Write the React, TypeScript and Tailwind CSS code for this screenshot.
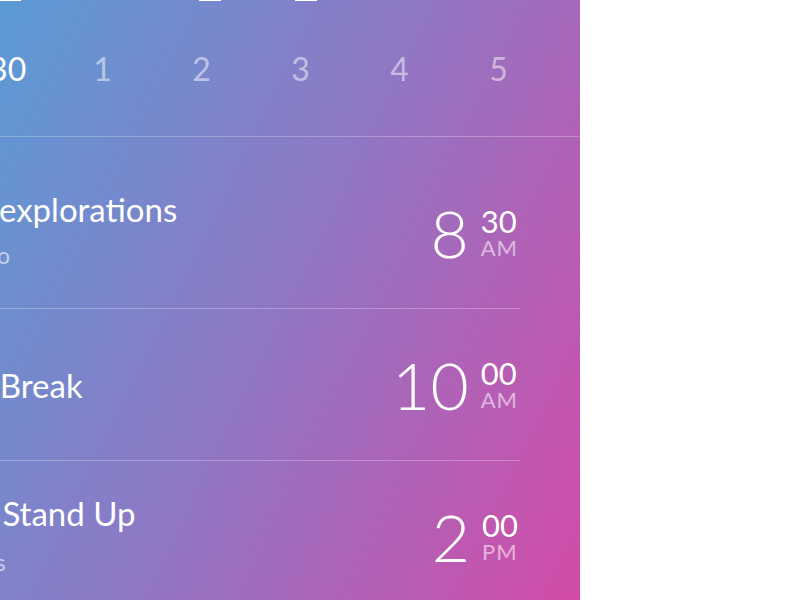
import React from "react";

const hours = ["1", "2", "3", "4", "5"];

type Ev = {
  title: string;
  titleOffset: string;
  sub?: string;
  subOffset?: string;
  subSpace?: string;
  hour: string;
  min: string;
  ampm: string;
  extra?: string;
};

const events: Ev[] = [
  {
    title: "UI explorations",
    titleOffset: "-ml-[43px]",
    sub: "Design Studio",
    subOffset: "-ml-[130px]",
    subSpace: "mt-[13px] mb-[8px]",
    hour: "8",
    min: "30",
    ampm: "AM",
    extra: "mt-[20px]",
  },
  { title: "Coffee Break", titleOffset: "-ml-[105px]", hour: "10", min: "00", ampm: "AM" },
  {
    title: "Daily Stand Up",
    titleOffset: "-ml-[79px]",
    sub: "All Teams",
    subOffset: "-ml-[89px]",
    subSpace: "mt-[16px] mb-[5px]",
    hour: "2",
    min: "00",
    ampm: "PM",
  },
];

export default function App() {
  return (
    <div
      className="w-[800px] h-[600px] bg-white flex overflow-hidden"
      style={{ fontFamily: "Lato, 'Noto Sans', sans-serif" }}
    >
      <div className="w-[580px] h-[600px] shrink-0 overflow-hidden flex flex-col bg-[linear-gradient(116deg,#5b9bd6_0%,#9176c3_50%,#d34ba8_100%)] text-white">
        {/* top day markers */}
        <div className="h-px shrink-0 flex">
          <div className="w-[21px] bg-white" />
          <div className="w-[178px]" />
          <div className="w-[22px] bg-white" />
          <div className="w-[74px]" />
          <div className="w-[22px] bg-white" />
        </div>

        {/* hours strip */}
        <div className="h-[135px] shrink-0 flex items-center">
          <div className="flex items-center whitespace-nowrap">
            <div className="w-[80px] -ml-[56px] text-right text-[32px] leading-none text-white">
              12:30
            </div>
            <div className="flex ml-[29px]">
              {hours.map((h) => (
                <div
                  key={h}
                  className="w-[99px] text-center text-[32px] leading-none text-white/50"
                >
                  {h}
                </div>
              ))}
            </div>
          </div>
        </div>
        <div className="h-px shrink-0 bg-white/25" />

        {/* events */}
        <div className="w-[520px] shrink-0 flex flex-col">
          {events.map((e) => (
            <div
              key={e.title}
              className={`h-[152px] shrink-0 flex items-center justify-between border-b border-white/25 ${e.extra ?? ""}`}
            >
              <div className="flex flex-col whitespace-nowrap">
                <div className={`text-[33px] leading-[40px] ${e.titleOffset}`}>{e.title}</div>
                {e.sub && (
                  <div
                    className={`text-[23px] leading-[26px] text-white/60 ${e.subSpace} ${e.subOffset}`}
                  >
                    {e.sub}
                  </div>
                )}
              </div>
              <div className="flex items-start pr-[2px]">
                <div className="text-[66px] leading-[56px] font-light">{e.hour}</div>
                <div className="flex flex-col ml-[12px] mt-[1px]">
                  <div className="text-[31px] leading-[30px]">{e.min}</div>
                  <div className="text-[22px] leading-[24px] text-white/55 tracking-[1px]">
                    {e.ampm}
                  </div>
                </div>
              </div>
            </div>
          ))}
        </div>
      </div>
    </div>
  );
}
